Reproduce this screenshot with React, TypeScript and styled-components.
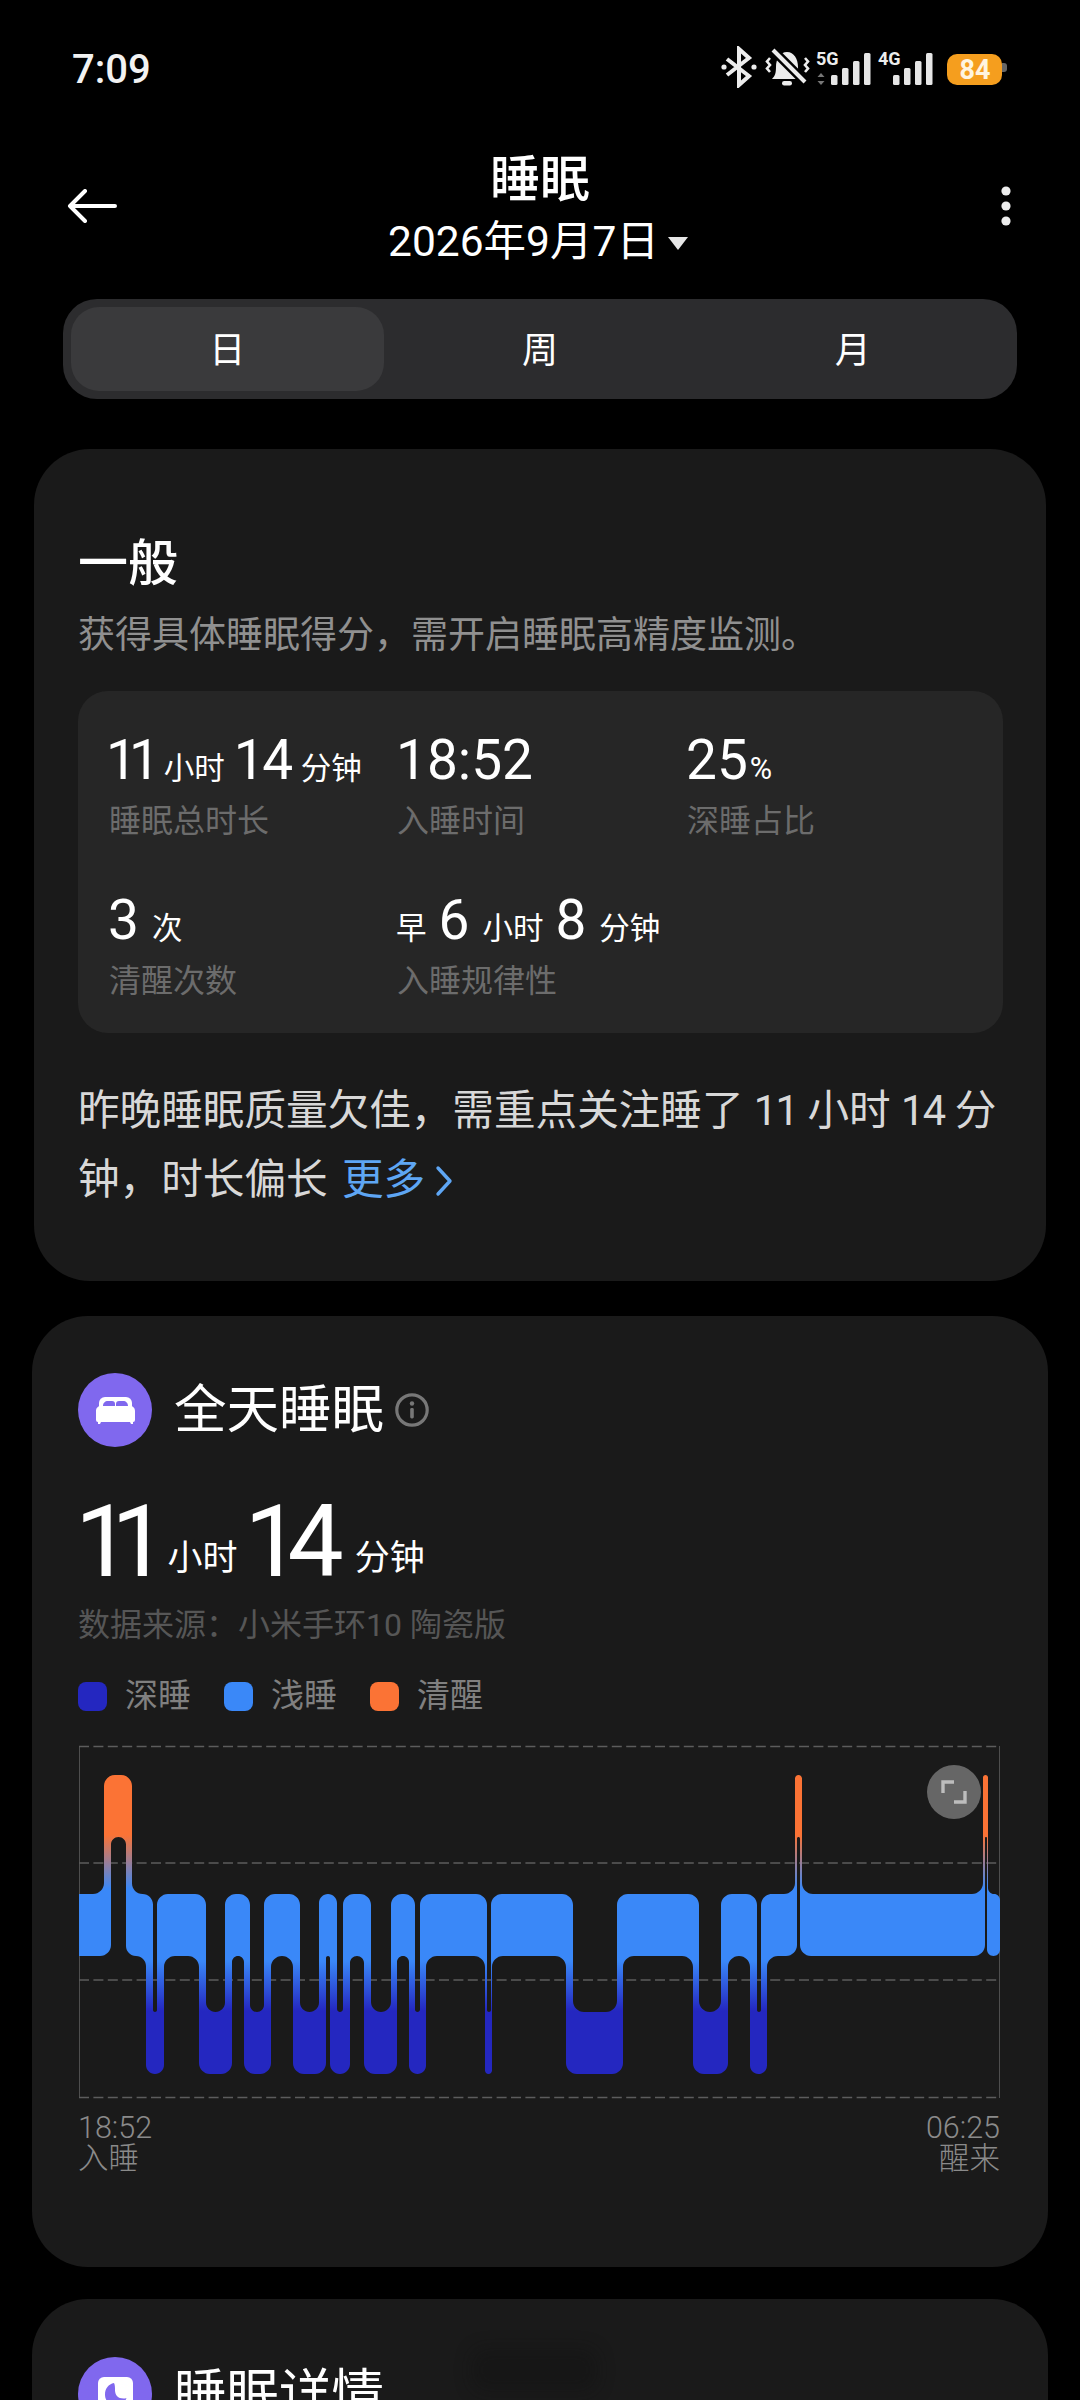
import React from 'react';
import styled, { createGlobalStyle } from 'styled-components';

const GlobalStyle = createGlobalStyle`
  html, body {
    margin: 0;
    padding: 0;
    height: 2400px;
    overflow: hidden;
    background: #000;
  }
  body {
    font-family: Roboto, "Noto Sans CJK SC", sans-serif;
    color: #fff;
  }
`;

const Page = styled.div`
  width: 1080px;
  height: 2400px;
  overflow: hidden;
  background: #000;
`;

/* status bar */
const StatusBar = styled.div`
  height: 138px;
  padding: 0 72px;
  box-sizing: border-box;
  display: flex;
  justify-content: space-between;
  align-items: flex-start;
`;

const Clock = styled.div`
  margin-top: 47px;
  font-size: 40px;
  line-height: 46px;
  font-weight: 500;
  color: #f2f2f2;
`;

const StatusIcons = styled.svg`
  margin-top: 46px;
  flex: none;
`;

/* header */
const Header = styled.div`
  height: 161px;
  padding: 0 67px 21px;
  box-sizing: border-box;
  display: grid;
  grid-template-columns: 60px 1fr 60px;
  align-items: center;
`;

const BackIcon = styled.svg`
  margin-top: -4px;
`;

const MoreIcon = styled.svg`
  justify-self: end;
  margin-top: -4px;
  margin-right: 2px;
`;

const HeaderCenter = styled.div`
  display: flex;
  flex-direction: column;
  align-items: center;
`;

const PageTitle = styled.div`
  font-size: 50px;
  line-height: 60px;
  font-weight: 500;
`;

const DateRow = styled.div`
  margin: 8px 0 0 -4px;
  display: flex;
  align-items: center;
  gap: 9px;
  font-size: 42.5px;
  line-height: 48px;
`;

const Caret = styled.span`
  width: 0;
  height: 0;
  margin-top: 2px;
  border-left: 10.5px solid transparent;
  border-right: 10.5px solid transparent;
  border-top: 13px solid #e6e6e6;
`;

/* tabs */
const Tabs = styled.div`
  margin: 0 63px;
  height: 100px;
  padding: 8px;
  box-sizing: border-box;
  display: grid;
  grid-template-columns: repeat(3, 1fr);
  background: #2c2c2e;
  border-radius: 34px;
`;

const Tab = styled.div<{ $active?: boolean }>`
  display: flex;
  align-items: center;
  justify-content: center;
  padding-bottom: 4px;
  font-size: 36px;
  border-radius: 28px;
  color: #fff;
  background: ${props => (props.$active ? '#3a3a3c' : 'transparent')};
`;

/* cards */
const Card = styled.section<{ $inset: number; $top: number; $height: number }>`
  position: relative;
  margin: ${props => props.$top}px ${props => props.$inset}px 0;
  height: ${props => props.$height}px;
  box-sizing: border-box;
  padding: 0 ${props => 78 - props.$inset}px;
  background: #1a1a1a;
  border-radius: 56px;
  overflow: hidden;
`;

const SummaryTitle = styled.h2`
  margin: 85px 0 0;
  font-size: 50px;
  line-height: 60px;
  font-weight: 500;
`;

const SummaryHint = styled.p`
  margin: 17px 0 0;
  font-size: 37px;
  line-height: 50px;
  color: #909090;
`;

const StatsBox = styled.div`
  margin: 30px -1px 0 0;
  height: 342px;
  padding: 41px 32px 0;
  box-sizing: border-box;
  display: grid;
  grid-template-columns: 288px 290px 1fr;
  grid-auto-rows: 160px;
  background: #262626;
  border-radius: 30px;
`;

const Stat = styled.div`
  display: flex;
  flex-direction: column;
`;

const StatValue = styled.div`
  height: 56px;
  margin-left: -2px;
  display: flex;
  align-items: baseline;
  white-space: nowrap;
  font-size: 55px;
  line-height: 56px;
`;

/* the reference's 1 is much narrower than Roboto's */
const Digits = styled.span<{ $spacing: number; $shift?: number }>`
  letter-spacing: ${props => props.$spacing}px;
  margin-left: ${props => props.$shift ?? 0}px;
`;

const StatUnit = styled.span<{ $before?: number; $after?: number }>`
  font-size: 30.5px;
  margin: 0 ${props => props.$after ?? 12}px 0 ${props => props.$before ?? 13}px;
`;

const StatLabel = styled.div`
  margin: 13px 0 0 -1px;
  font-size: 32px;
  line-height: 40px;
  color: #6c6c6c;
`;

const Summary = styled.p`
  margin: 43px -10px 0 0;
  font-size: 41.6px;
  line-height: 69px;
  color: #d8d8d8;
`;

const MoreLink = styled.span`
  margin-left: 4px;
  color: #5ea6f4;
  white-space: nowrap;
`;

const Chevron = styled.svg`
  margin-left: 10px;
  vertical-align: -3px;
`;

const CardHeader = styled.div<{ $top: number }>`
  margin-top: ${props => props.$top}px;
  display: flex;
  align-items: center;
  height: 74px;
`;

const IconBadge = styled.div`
  width: 74px;
  height: 74px;
  border-radius: 50%;
  flex: none;
  display: flex;
  align-items: center;
  justify-content: center;
  background: #8068ee;
`;

const CardTitle = styled.h3`
  margin: 0 0 0 22px;
  font-size: 52.5px;
  line-height: 60px;
  font-weight: 400;
`;

const InfoIcon = styled.svg`
  margin-left: 11px;
`;

const BigValue = styled.div`
  margin-top: 40px;
  height: 110px;
  display: flex;
  align-items: baseline;
  font-size: 100px;
  line-height: 110px;
`;

const BigUnit = styled.span<{ $before: number; $after?: number }>`
  align-self: flex-end;
  margin: 0 ${props => props.$after ?? 0}px 0 ${props => props.$before}px;
  padding-bottom: 21px;
  font-size: 35px;
  line-height: 35px;
`;

const Source = styled.div`
  margin-top: 6px;
  font-size: 32px;
  line-height: 44px;
  color: #565656;
`;

const Legend = styled.div`
  margin-top: 27px;
  display: flex;
  gap: 33px;
`;

const LegendItem = styled.div`
  display: flex;
  align-items: center;
  gap: 18px;
  font-size: 33px;
  line-height: 44px;
  color: #808080;
`;

const Swatch = styled.span<{ $color: string }>`
  width: 29px;
  height: 29px;
  border-radius: 8px;
  background: ${props => props.$color};
`;

const ChartWrap = styled.div`
  position: relative;
  margin-top: 28px;
  margin-left: 1px;
  width: 921px;
  height: 352px;
`;

const ExpandButton = styled.div`
  position: absolute;
  left: 848px;
  top: 19px;
  width: 54px;
  height: 54px;
  border-radius: 50%;
  display: flex;
  align-items: center;
  justify-content: center;
  background: #666;
`;

const TimeAxis = styled.div`
  margin-top: 14px;
  display: flex;
  justify-content: space-between;
  width: 922px;
`;

const TimeMark = styled.div<{ $right?: boolean }>`
  text-align: ${props => (props.$right ? 'right' : 'left')};
  font-size: 30.5px;
  line-height: 31px;
  font-weight: 300;
  color: #8a8a8a;
`;

const MoonTile = styled.div`
  width: 35px;
  height: 35px;
  border-radius: 6px;
  background: #fff;
  display: flex;
  align-items: center;
  justify-content: center;
`;

const Smudge = styled.div`
  position: absolute;
  left: 440px;
  top: 50px;
  width: 125px;
  height: 42px;
  border-radius: 12px;
  background: #111;
  opacity: 0.35;
  filter: blur(9px);
`;

/* chart geometry, in page pixels so it can be read against the reference */
const TOP = { A: 1776, L: 1895, D: 2013 };
const BOTTOM = { A: 1838, L: 1957, D: 2075 };
type Level = keyof typeof TOP;

// next level, x where the upper edge steps, x where the lower edge steps
const steps: [Level, number, number][] = [
  ['A', 104, 111], ['L', 132, 126], ['D', 153, 146], ['L', 157, 164],
  ['D', 206, 199], ['L', 225, 232], ['D', 250, 244], ['L', 264, 271],
  ['D', 300, 293], ['L', 319, 326], ['D', 337, 330], ['L', 343, 350],
  ['D', 371, 364], ['L', 391, 397], ['D', 415, 409], ['L', 420, 426],
  ['D', 487, 485], ['L', 491, 492], ['D', 573, 566], ['L', 617, 623],
  ['D', 699, 693], ['L', 721, 728], ['D', 757, 750], ['L', 761, 767],
  ['A', 795, 797], ['L', 802, 800], ['A', 983, 985], ['L', 988, 987],
];

const LEFT = 79;
const RIGHT = 1000;

function outline(): [number, number][] {
  const upper: [number, number][] = [[LEFT, TOP.L]];
  const lower: [number, number][] = [[LEFT, BOTTOM.L]];
  let level: Level = 'L';
  for (const [next, topX, botX] of steps) {
    upper.push([topX, TOP[level]], [topX, TOP[next]]);
    lower.push([botX, BOTTOM[level]], [botX, BOTTOM[next]]);
    level = next;
  }
  upper.push([RIGHT, TOP.L]);
  lower.push([RIGHT, BOTTOM.L]);
  return [...upper, ...lower.reverse()];
}

function roundedPath(points: [number, number][], radius: number) {
  const n = points.length;
  const k = 0.55;
  let d = '';
  points.forEach(([x, y], i) => {
    const [px, py] = points[(i + n - 1) % n];
    const [nx, ny] = points[(i + 1) % n];
    const lenA = Math.hypot(x - px, y - py) || 1;
    const lenB = Math.hypot(nx - x, ny - y) || 1;
    const r = x === LEFT ? 0 : Math.min(radius, lenA / 2, lenB / 2);
    const ax = x + ((px - x) / lenA) * r;
    const ay = y + ((py - y) / lenA) * r;
    const bx = x + ((nx - x) / lenB) * r;
    const by = y + ((ny - y) / lenB) * r;
    d += `${i === 0 ? 'M' : 'L'}${ax} ${ay}`;
    d += `C${ax + (x - ax) * k} ${ay + (y - ay) * k} ${bx + (x - bx) * k} ${by + (y - by) * k} ${bx} ${by}`;
  });
  return d + 'Z';
}

const stageStops: [number, string][] = [
  [1776, '#fb7335'], [1836, '#fb7335'], [1890, '#3a88f8'],
  [1962, '#3a88f8'], [2012, '#2427c0'], [2075, '#2427c0'],
];

const SleepChart: React.FC = () => (
  <svg width={921} height={352} viewBox="79 1747 921 352" style={{ display: 'block', overflow: 'visible' }}>
    <defs>
      <linearGradient id="stages" gradientUnits="userSpaceOnUse" x1={0} x2={0} y1={1776} y2={2075}>
        {stageStops.map(([y, color]) => (
          <stop key={y} offset={(y - 1776) / 299} stopColor={color} />
        ))}
      </linearGradient>
    </defs>
    <path d="M79.5 1747V2099M999.5 1747V2099" stroke="#4e4e4e" strokeWidth={1} />
    {[1747.5, 1864, 1981, 2098.5].map(y => (
      <line key={y} x1={79} x2={1000} y1={y} y2={y} stroke="#5c5c5c" strokeWidth={1.5} strokeDasharray="10 4.4" />
    ))}
    <path d={roundedPath(outline(), 11)} fill="url(#stages)" />
  </svg>
);

const signal = (x: number) => (
  <g fill="#e6e6e6">
    <rect x={x} y={29} width={6.5} height={10} rx={1.5} />
    <rect x={x + 11} y={22} width={6.5} height={17} rx={1.5} />
    <rect x={x + 22} y={15} width={6.5} height={24} rx={1.5} />
    <rect x={x + 33} y={7} width={6.5} height={32} rx={1.5} />
  </g>
);

const App: React.FC = () => (
  <Page>
    <GlobalStyle />
    <StatusBar>
      <Clock>7:09</Clock>
      <StatusIcons width={287} height={42} viewBox="0 0 287 42">
        <g fill="none" stroke="#ececec" strokeWidth={4} strokeLinejoin="miter">
          <path d="M6 13 28 30 18 39V3L28 12 6 29" />
        </g>
        <circle cx={3} cy={21} r={2.6} fill="#ececec" />
        <circle cx={33} cy={21} r={2.6} fill="#ececec" />
        <path d="M66 6c-7 0-11 7-11 15 0 6-1 9-4 12h30c-3-3-4-6-4-12 0-8-4-15-11-15z" fill="#ececec" />
        <rect x={61} y={35} width={10} height={4.5} rx={2.2} fill="#ececec" />
        <path d="M52 4 84 36" stroke="#000" strokeWidth={9} />
        <path d="M52 4 84 36" stroke="#ececec" strokeWidth={4} />
        <path d="M49 12l-3 3.500 3 3.500-3 3.500 3 3.500M84 12l3 3.500-3 3.500 3 3.500-3 3.500" fill="none" stroke="#ececec" strokeWidth={2.6} />
        <text x={95} y={19} fontFamily="Roboto, sans-serif" fontSize={18} fontWeight={700} fill="#ececec">5G</text>
        <path d="M100 27l3.500 4h-7zM100 39l3.500-4h-7z" fill="#777" />
        {signal(110)}
        <text x={157} y={19} fontFamily="Roboto, sans-serif" fontSize={18} fontWeight={700} fill="#ececec">4G</text>
        {signal(172)}
        <rect x={226} y={8} width={55} height={31} rx={10} fill="#f59e1e" />
        <path d="M281 17h2a3 3 0 0 1 3 3v3a3 3 0 0 1-3 3h-2z" fill="#666" />
        <text x={254} y={33} textAnchor="middle" fontFamily="Roboto, sans-serif" fontSize={27} fontWeight={700} fill="#fff4e0">84</text>
      </StatusIcons>
    </StatusBar>

    <Header>
      <BackIcon width={50} height={34} viewBox="0 0 50 34" fill="none" stroke="#fff" strokeWidth={4} strokeLinecap="round" strokeLinejoin="round">
        <path d="M18 2 3 17l15 15M3 17h45" />
      </BackIcon>
      <HeaderCenter>
        <PageTitle>睡眠</PageTitle>
        <DateRow>
          2026年9月7日
          <Caret />
        </DateRow>
      </HeaderCenter>
      <MoreIcon width={10} height={40} viewBox="0 0 10 40" fill="#ededed">
        <circle cx={5} cy={5} r={4.6} />
        <circle cx={5} cy={20} r={4.6} />
        <circle cx={5} cy={35} r={4.6} />
      </MoreIcon>
    </Header>

    <Tabs>
      <Tab $active>日</Tab>
      <Tab>周</Tab>
      <Tab>月</Tab>
    </Tabs>

    <Card $inset={34} $top={50} $height={832}>
      <SummaryTitle>一般</SummaryTitle>
      <SummaryHint>获得具体睡眠得分，需开启睡眠高精度监测。</SummaryHint>
      <StatsBox>
        <Stat>
          <StatValue>
            <Digits $spacing={-8} $shift={-2}>11</Digits>
            <StatUnit $before={12} $after={9}>小时</StatUnit>
            <Digits $spacing={-2.5}>14</Digits>
            <StatUnit $before={10}>分钟</StatUnit>
          </StatValue>
          <StatLabel>睡眠总时长</StatLabel>
        </Stat>
        <Stat>
          <StatValue>18:52</StatValue>
          <StatLabel>入睡时间</StatLabel>
        </Stat>
        <Stat>
          <StatValue>
            25<StatUnit $before={2}>%</StatUnit>
          </StatValue>
          <StatLabel>深睡占比</StatLabel>
        </Stat>
        <Stat>
          <StatValue>
            3<StatUnit>次</StatUnit>
          </StatValue>
          <StatLabel>清醒次数</StatLabel>
        </Stat>
        <Stat>
          <StatValue>
            <StatUnit $before={0}>早</StatUnit>
            6
            <StatUnit>小时</StatUnit>
            8
            <StatUnit>分钟</StatUnit>
          </StatValue>
          <StatLabel>入睡规律性</StatLabel>
        </Stat>
      </StatsBox>
      <Summary>
        昨晚睡眠质量欠佳，需重点关注睡了 <Digits $spacing={-1.7}>11</Digits> 小时 <Digits $spacing={-1.7}>14</Digits> 分钟，时长偏长{' '}
        <MoreLink>
          更多
          <Chevron width={18} height={32} viewBox="0 0 18 32" fill="none" stroke="#5ea6f4" strokeWidth={3.4} strokeLinecap="round" strokeLinejoin="round">
            <path d="M3 3l12 13L3 29" />
          </Chevron>
        </MoreLink>
      </Summary>
    </Card>

    <Card $inset={32} $top={35} $height={951}>
      <CardHeader $top={57}>
        <IconBadge>
          <svg width={39} height={27} viewBox="0 0 39 27">
            <path d="M3 11V6a6 6 0 0 1 6-6h21a6 6 0 0 1 6 6v5z" fill="#fff" />
            <path d="M7 9c0-3 2-5 5-5h4c2 0 3 1 3 3v2zM20 9V7c0-2 1-3 3-3h4c3 0 5 2 5 5z" fill="#8068ee" />
            <path d="M5 9h29c3 0 5 2 5 5v9a2 2 0 0 1-2 2v2h-2l-1-2H5l-1 2H2v-2a2 2 0 0 1-2-2v-9c0-3 2-5 5-5z" fill="#fff" />
          </svg>
        </IconBadge>
        <CardTitle>全天睡眠</CardTitle>
        <InfoIcon width={34} height={34} viewBox="0 0 34 34" fill="none">
          <circle cx={17} cy={17} r={15.2} stroke="#777" strokeWidth={3.2} />
          <circle cx={17} cy={10.5} r={2.2} fill="#777" />
          <rect x={15.2} y={15} width={3.6} height={10.5} rx={1.4} fill="#777" />
        </InfoIcon>
      </CardHeader>
      <BigValue>
        <Digits $spacing={-20} $shift={-3}>11</Digits>
        <BigUnit $before={20} $after={7}>小时</BigUnit>
        <Digits $spacing={-13}>14</Digits>
        <BigUnit $before={24}>分钟</BigUnit>
      </BigValue>
      <Source>数据来源：小米手环10 陶瓷版</Source>
      <Legend>
        <LegendItem>
          <Swatch $color="#2427c0" />
          深睡
        </LegendItem>
        <LegendItem>
          <Swatch $color="#3a88f8" />
          浅睡
        </LegendItem>
        <LegendItem>
          <Swatch $color="#fb7335" />
          清醒
        </LegendItem>
      </Legend>
      <ChartWrap>
        <SleepChart />
        <ExpandButton>
          <svg width={26} height={24} viewBox="0 0 26 24" fill="none" stroke="#bdbdbd" strokeWidth={3.4}>
            <path d="M13 2H2v11M13 22h11V11" />
          </svg>
        </ExpandButton>
      </ChartWrap>
      <TimeAxis>
        <TimeMark>
          18:52
          <br />
          入睡
        </TimeMark>
        <TimeMark $right>
          06:25
          <br />
          醒来
        </TimeMark>
      </TimeAxis>
    </Card>

    <Card $inset={32} $top={32} $height={200}>
      <CardHeader $top={58}>
        <IconBadge>
          <MoonTile>
            <svg width={23} height={25} viewBox="0 0 23 25" fill="#8068ee">
              <path d="M10 1C4.500 2 1 6.500 1 12.500 1 19 6 24 12 24c5 0 9-3.500 10.500-8-1 .5-2 .5-3 .5C14 16.500 11 13 11 8c0-2.500 0-5-1-7z" />
            </svg>
          </MoonTile>
        </IconBadge>
        <CardTitle>睡眠详情</CardTitle>
      </CardHeader>
      <Smudge />
    </Card>
  </Page>
);

export default App;
